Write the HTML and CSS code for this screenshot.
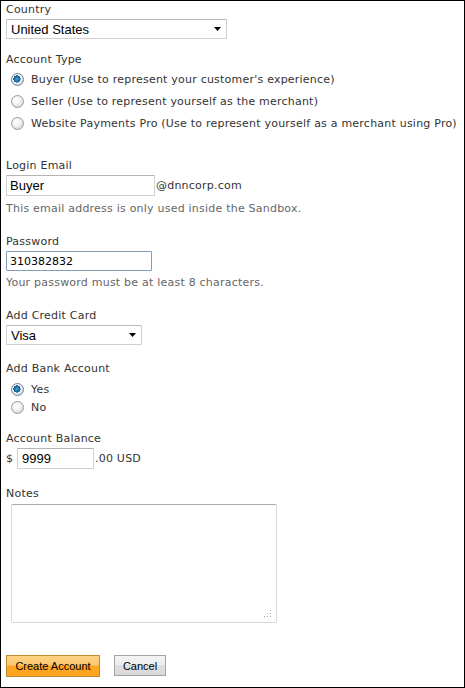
FILE: index.html
```html
<!DOCTYPE html>
<html>
<head>
<meta charset="utf-8">
<link rel="stylesheet" href="styles.css">
</head>
<body>
<form class="page">
  <label class="lbl">Country</label>
  <div class="sel-wrap sel-country">
    <select class="sel"><option>United States</option></select>
    <svg class="arrow" width="7" height="4" viewBox="0 0 7 4"><path d="M0 0h7L3.5 4z" fill="#000"/></svg>
  </div>

  <label class="lbl mt12">Account Type</label>
  <div class="radios big">
    <label class="radio-row"><input type="radio" name="t" checked><span>Buyer (Use to represent your customer's experience)</span></label>
    <label class="radio-row"><input type="radio" name="t"><span>Seller (Use to represent yourself as the merchant)</span></label>
    <label class="radio-row"><input type="radio" name="t"><span>Website Payments Pro (Use to represent yourself as a merchant using Pro)</span></label>
  </div>

  <label class="lbl mt23">Login Email</label>
  <div class="row mt2">
    <input class="txt email" type="text" value="Buyer">
    <span class="suffix">@dnncorp.com</span>
  </div>
  <p class="help mt4">This email address is only used inside the Sandbox.</p>

  <label class="lbl mt17">Password</label>
  <div class="row mt2">
    <input class="txt pw" type="text" value="310382832">
  </div>
  <p class="help mt3">Your password must be at least 8 characters.</p>

  <label class="lbl mt17">Add Credit Card</label>
  <div class="sel-wrap sel-card">
    <select class="sel"><option>Visa</option></select>
    <svg class="arrow" width="7" height="4" viewBox="0 0 7 4"><path d="M0 0h7L3.5 4z" fill="#000"/></svg>
  </div>

  <label class="lbl mt15">Add Bank Account</label>
  <div class="radios small">
    <label class="radio-row"><input type="radio" name="b" checked><span>Yes</span></label>
    <label class="radio-row"><input type="radio" name="b"><span>No</span></label>
  </div>

  <label class="lbl mt14">Account Balance</label>
  <div class="row mt2">
    <span class="cur">$</span>
    <input class="txt bal" type="text" value="9999">
    <span class="suffix">.00 USD</span>
  </div>

  <label class="lbl mt16">Notes</label>
  <div class="notes-wrap">
    <textarea class="notes"></textarea>
    <svg class="grip" width="8" height="8" viewBox="0 0 8 8"><g fill="#a8a8a8"><rect x="6" y="0" width="1" height="1"/><rect x="3" y="3" width="1" height="1"/><rect x="6" y="3" width="1" height="1"/><rect x="0" y="6" width="1" height="1"/><rect x="3" y="6" width="1" height="1"/><rect x="6" y="6" width="1" height="1"/></g></svg>
  </div>

  <div class="buttons">
    <button type="button" class="btn primary">Create Account</button>
    <button type="button" class="btn secondary">Cancel</button>
  </div>
</form>
</body>
</html>
```
FILE: styles.css
```css
html, body {
  margin: 0;
  padding: 0;
  background: #fff;
}
.page {
  box-sizing: border-box;
  width: 465px;
  height: 688px;
  border: 1px solid #000;
  padding: 0 5px;
  margin: 0;
  display: flex;
  flex-direction: column;
  align-items: flex-start;
  font-family: "DejaVu Sans", Verdana, sans-serif;
  font-size: 11px;
  letter-spacing: 0.22px;
  color: #333;
}
.lbl {
  display: block;
  padding-top: 1px;
  font-size: 11px;
  line-height: 15px;
  color: #333;
}
.help {
  margin-bottom: 0;
  padding-top: 1px;
  font-size: 11px;
  line-height: 15px;
  color: #666;
}
.mt2 { margin-top: 2px; }
.mt3 { margin-top: 3px; }
.mt4 { margin-top: 4px; }
.mt12 { margin-top: 12px; }
.mt14 { margin-top: 14px; }
.mt15 { margin-top: 15px; }
.mt16 { margin-top: 16px; }
.mt17 { margin-top: 17px; }
.mt23 { margin-top: 23px; }

.sel-wrap {
  position: relative;
  margin-top: 2px;
}
.sel {
  -webkit-appearance: none;
  appearance: none;
  box-sizing: border-box;
  height: 20px;
  border: 1px solid #cfcfcf;
  border-top-color: #b8b8b8;
  border-radius: 1px;
  background: #fff;
  font-family: "Liberation Sans", Arial, sans-serif;
  font-size: 13px;
  letter-spacing: 0;
  color: #000;
  padding: 0 0 0 4px;
  margin: 0;
  display: block;
}
.sel-country .sel { width: 221px; }
.sel-card .sel { width: 136px; }
.arrow {
  position: absolute;
  right: 6px;
  top: 8px;
  pointer-events: none;
}

.radios {
  display: flex;
  flex-direction: column;
}
.radios.big { margin-top: 1px; }
.radios.small { margin-top: 4px; }
.radio-row {
  display: flex;
  align-items: center;
  gap: 7px;
  padding-left: 5px;
  font-size: 11px;
  color: #333;
  line-height: 15px;
}
.radios.big .radio-row { height: 22px; }
.radios.small .radio-row { height: 18px; }
.radio-row input {
  -webkit-appearance: none;
  appearance: none;
  margin: 0;
  width: 13px;
  height: 13px;
  border-radius: 50%;
  border: 1px solid #9a9a9a;
  box-sizing: border-box;
  background: radial-gradient(circle at 40% 35%, #ffffff 0%, #f0f0f0 45%, #c8c8c8 100%);
  flex: none;
}
.radio-row input:checked {
  border-color: #6b7f95;
  background:
    radial-gradient(circle at 45% 45%, #4aa2d6 0%, #1b6fa8 28%, #0c4a7a 40%, transparent 44%),
    radial-gradient(circle at 40% 35%, #ffffff 0%, #eef2f5 50%, #b9c2cc 100%);
}

.row {
  display: flex;
  align-items: center;
}
.txt {
  box-sizing: border-box;
  margin: 0;
  border: 1px solid #d2d2d2;
  border-top-color: #b4b4b4;
  border-radius: 1px;
  background: #fff;
  color: #000;
  letter-spacing: 0;
  outline: none;
}
.email {
  width: 149px;
  height: 21px;
  padding: 0 0 0 3px;
  font-family: "Liberation Sans", Arial, sans-serif;
  font-size: 13px;
}
.pw {
  width: 146px;
  height: 20px;
  padding: 0 0 0 3px;
  border: 1px solid #7f9db9;
  font-family: "DejaVu Sans", Verdana, sans-serif;
  font-size: 11px;
}
.bal {
  width: 77px;
  height: 21px;
  padding: 0 0 0 4px;
  font-family: "Liberation Sans", Arial, sans-serif;
  font-size: 13px;
}
.suffix {
  margin-left: 1px;
  font-size: 11px;
  color: #333;
}
.bal + .suffix { margin-left: 1px; }
.cur {
  width: 11px;
  font-size: 11px;
  color: #333;
}

.notes-wrap {
  position: relative;
  margin-top: 3px;
  margin-left: 5px;
}
.notes {
  display: block;
  box-sizing: border-box;
  width: 266px;
  height: 119px;
  margin: 0;
  border: 1px solid #d4d8dc;
  border-top-color: #a9a9a9;
  border-radius: 2px;
  resize: none;
  background: #fff;
}
.grip {
  position: absolute;
  right: 5px;
  bottom: 5px;
}

.buttons {
  display: flex;
  align-items: flex-start;
  gap: 14px;
  margin-top: 32px;
}
.btn {
  box-sizing: border-box;
  margin: 0;
  padding: 0;
  font-family: "Liberation Sans", Arial, sans-serif;
  font-size: 11px;
  letter-spacing: 0;
  color: #000;
  border-radius: 0;
}
.primary {
  width: 94px;
  height: 22px;
  border: 1px solid #c08a2e;
  background: linear-gradient(to bottom, #fed383 0%, #fdc872 45%, #ffa726 50%, #ffa31d 100%);
}
.secondary {
  width: 52px;
  height: 21px;
  border: 1px solid #a4a4a4;
  background: linear-gradient(to bottom, #f4f4f4 0%, #ededed 45%, #dedede 50%, #d9d9d9 100%);
}
```
